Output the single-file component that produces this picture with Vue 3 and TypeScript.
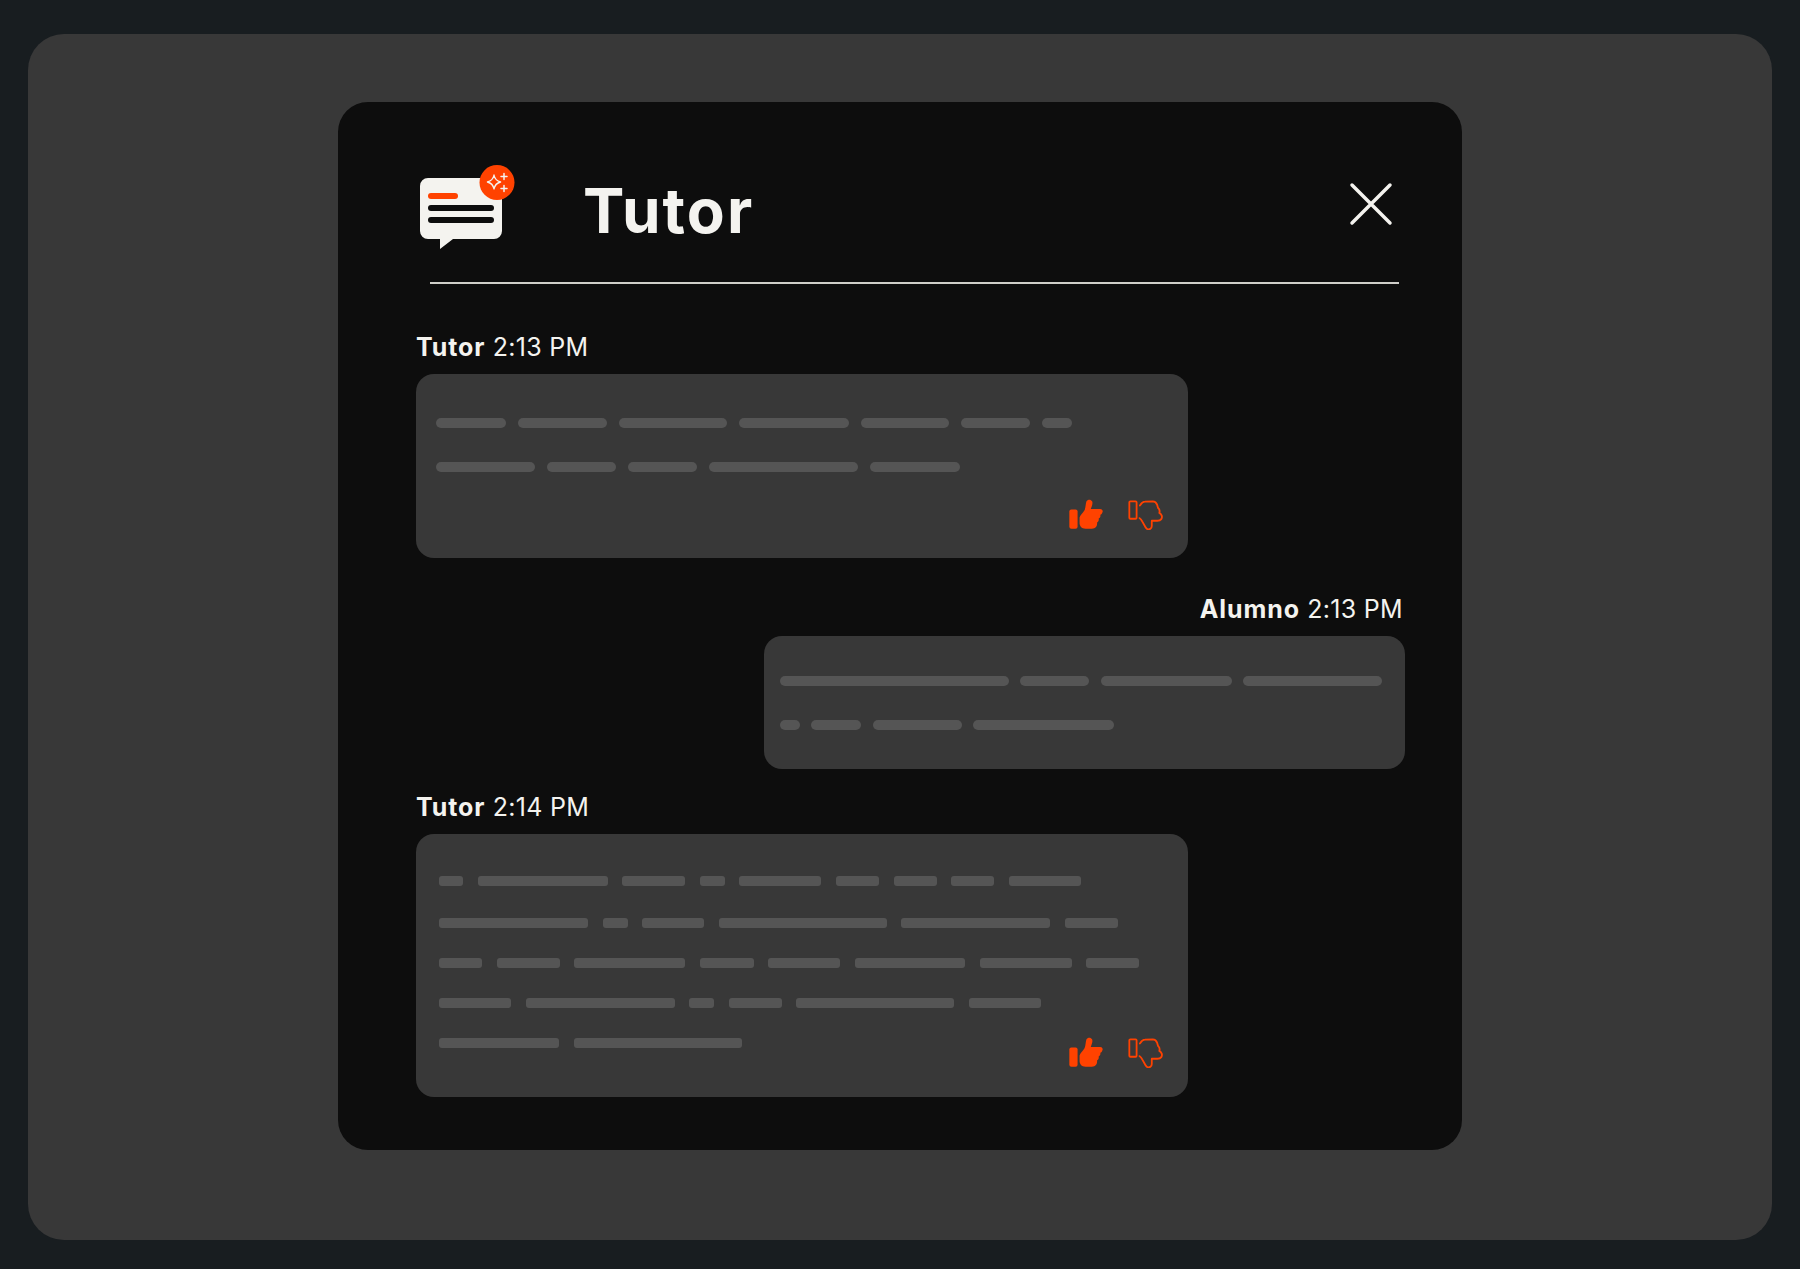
<script setup lang="ts">
interface Message {
  id: number
  author: string
  time: string
  mine: boolean
  dense: boolean
  rate: boolean
  rows: number[][]
}

const messages: Message[] = [
  {
    id: 1,
    author: 'Tutor',
    time: '2:13 PM',
    mine: false,
    dense: false,
    rate: true,
    rows: [
      [70, 89, 108, 110, 88, 69, 30],
      [99, 69, 69, 149, 90],
    ],
  },
  {
    id: 2,
    author: 'Alumno',
    time: '2:13 PM',
    mine: true,
    dense: false,
    rate: false,
    rows: [
      [229, 69, 131, 139],
      [20, 50, 89, 141],
    ],
  },
  {
    id: 3,
    author: 'Tutor',
    time: '2:14 PM',
    mine: false,
    dense: true,
    rate: true,
    rows: [
      [24, 130, 63, 25, 82, 43, 43, 43, 72],
      [149, 25, 62, 168, 149, 53],
      [43, 63, 111, 54, 72, 110, 92, 53],
      [72, 149, 25, 53, 158, 72],
      [120, 168],
    ],
  },
]
</script>

<template>
  <div class="page">
    <div class="panel">
      <section class="modal">
        <header class="head">
          <svg class="logo" width="96" height="90" viewBox="0 0 96 90">
            <path d="M8 18h66a8 8 0 0 1 8 8v45a8 8 0 0 1-8 8H33L20 89V79H8a8 8 0 0 1-8-8V26a8 8 0 0 1 8-8z" fill="#f4f3ef" />
            <rect x="8" y="33" width="30" height="6" rx="3" fill="#ff4200" />
            <rect x="8" y="45" width="66" height="6" rx="3" fill="#0d0d0d" />
            <rect x="8" y="57" width="66" height="6" rx="3" fill="#0d0d0d" />
            <circle cx="77" cy="22.500" r="17.500" fill="#ff4200" />
            <path d="M74 15c.8 4.200 2.600 6 6.600 7-4 1-5.800 2.800-6.600 7-.8-4.200-2.600-6-6.600-7 4-1 5.800-2.800 6.600-7z" fill="none" stroke="#f4f3ef" stroke-width="1.300" stroke-linejoin="round" />
            <path d="M84 13.500v6M81 16.500h6M84 25.500v6M81 28.500h6" stroke="#f4f3ef" stroke-width="1.500" stroke-linecap="round" />
          </svg>
          <h1 class="title">Tutor</h1>
          <button class="close" aria-label="Cerrar">
            <svg width="44" height="44" viewBox="0 0 44 44">
              <path d="M3 3l38 38M41 3L3 41" stroke="#f4f3ef" stroke-width="3.500" stroke-linecap="round" />
            </svg>
          </button>
        </header>
        <div class="divider"></div>

        <article
          v-for="msg in messages"
          :key="msg.id"
          class="message"
          :class="{ mine: msg.mine, dense: msg.dense }"
        >
          <p class="meta"><b>{{ msg.author }}</b> {{ msg.time }}</p>
          <div class="bubble">
            <div class="rows">
              <div v-for="(row, i) in msg.rows" :key="i" class="row">
                <span
                  v-for="(w, j) in row"
                  :key="j"
                  class="bar"
                  :style="{ width: w + 'px' }"
                ></span>
              </div>
            </div>
            <div v-if="msg.rate" class="rate">
              <svg width="38" height="33" viewBox="80 50 115 100">
                <rect x="87" y="88" width="25" height="58" rx="6" fill="#ff4200" />
                <path d="M118 112C120 104 128 98 133 90C137 82 136 70 139 63C142 57 152 56 156 63C159 69 155 78 152 86L180 86C187 86 190 92 187 97C186 100 184 103 181 104C182 110 180 113 176 115C177 121 175 125 171 127C172 133 170 140 165 143C162 146 158 146 150 146L136 146C124 146 118 138 118 128Z" fill="#ff4200" />
              </svg>
              <svg width="38" height="33" viewBox="260 50 115 100" fill="none" stroke="#ff4200" stroke-width="5.500" stroke-linecap="round" stroke-linejoin="round">
                <rect x="267" y="63" width="22" height="53" rx="3" />
                <path d="M299 76C303 70 306 64 314 64L338 63C346 63 349 67 351 73L354 83C358 87 360 92 358 98C365 102 368 110 364 117C361 121 358 122 352 122L335 122L335 138C335 146 328 149 323 148C318 147 317 143 314 138L306 124C304 120 302 117 298 114" />
              </svg>
            </div>
          </div>
        </article>
      </section>
    </div>
  </div>
</template>

<style scoped>
.page {
  box-sizing: border-box;
  height: 1269px;
  padding: 34px 28px 29px;
  background: #181d20;
  font-family: Inter, "Liberation Sans", sans-serif;
  color: #f4f3ef;
}

.panel {
  height: 100%;
  padding-top: 68px;
  box-sizing: border-box;
  display: flex;
  justify-content: center;
  align-items: flex-start;
  background: #383838;
  border-radius: 36px;
}

.modal {
  box-sizing: border-box;
  width: 1124px;
  height: 1048px;
  padding: 0 57px 0 78px;
  background: #0d0d0d;
  border-radius: 30px;
}

.head {
  display: flex;
  align-items: flex-start;
  height: 180px;
  box-sizing: border-box;
  padding: 58px 0 0 4px;
}

.logo {
  flex: none;
  display: block;
}

.title {
  margin: 16px 0 0 67px;
  font-size: 62px;
  line-height: 70px;
  font-weight: 700;
  letter-spacing: 2.100px;
}

.close {
  margin: 22px 12px 0 auto;
  padding: 0;
  border: none;
  background: none;
  line-height: 0;
}

.divider {
  height: 2px;
  margin: 0 6px 0 14px;
  background: #cfcec9;
}

.message {
  margin-top: 48px;
}

.message.mine {
  margin-top: 36px;
  margin-left: 348px;
}

.message.dense {
  margin-top: 23px;
}

.meta {
  margin: 0 0 12px;
  font-size: 25px;
  line-height: 30px;
  font-weight: 400;
  letter-spacing: 0.300px;
}

.meta b {
  font-weight: 700;
  letter-spacing: 0.900px;
}

.mine .meta {
  text-align: right;
  padding-right: 2px;
}

.bubble {
  box-sizing: border-box;
  width: 772px;
  padding: 44px 23px 28px 20px;
  background: #383838;
  border-radius: 18px;
}

.mine .bubble {
  width: 641px;
  padding: 40px 16px 39px;
}

.dense .bubble {
  padding: 42px 23px 29px 23px;
}

.rows {
  display: flex;
  flex-direction: column;
  gap: 34px;
}

.dense .rows {
  gap: 30px;
}

.row {
  display: flex;
  gap: 12px;
}

.mine .row {
  gap: 11.300px;
}

.dense .row {
  gap: 14.600px;
}

.dense .row:first-child {
  margin-bottom: 2px;
}

.bar {
  flex: none;
  height: 10px;
  background: #555555;
  border-radius: 5px;
}

.dense .bar {
  border-radius: 3px;
}

.rate {
  display: flex;
  justify-content: flex-end;
  gap: 22px;
  margin-top: 25px;
}

.dense .rate {
  margin-top: -13px;
}
</style>
